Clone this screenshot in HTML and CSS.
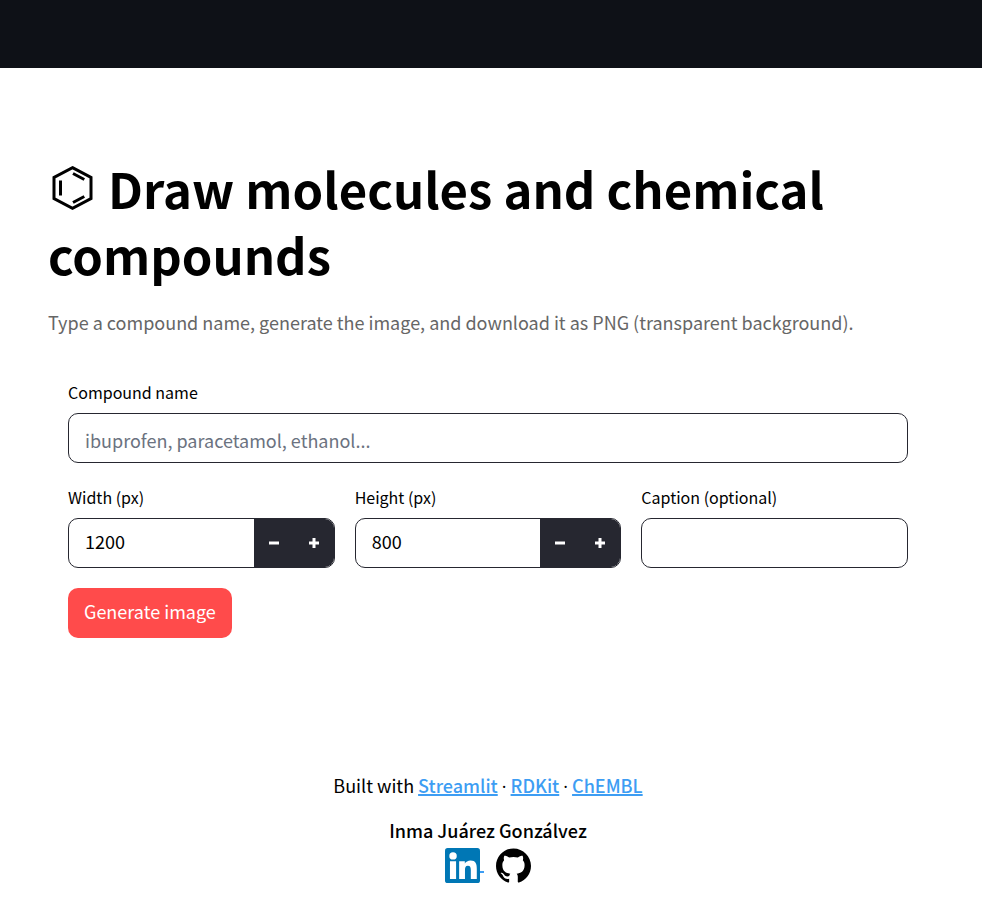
FILE: index.html
```html
<!DOCTYPE html>
<html lang="en">
<head>
<meta charset="utf-8">
<meta name="viewport" content="width=device-width, initial-scale=1">
<title>Draw molecules and chemical compounds</title>
<link rel="stylesheet" href="styles.css">
</head>
<body>
<header class="topbar"></header>
<main class="page">
  <h1 class="title"><svg class="molecule" viewBox="0 0 48 48" aria-hidden="true"><path d="M24 3.600 42.500 13.500v21L24 44.400 5.500 34.500v-21Z"/><path d="M12 16.500v15M24.500 9.500l11.300 6M24.500 38.500l11.300-6"/></svg> Draw molecules and chemical compounds</h1>
  <p class="intro">Type a compound name, generate the image, and download it as PNG (transparent background).</p>
  <form class="form">
    <div class="field">
      <label for="compound">Compound name</label>
      <div class="control"><input id="compound" class="text" type="text" placeholder="ibuprofen, paracetamol, ethanol..."></div>
    </div>
    <div class="columns">
      <div class="field">
        <label for="width">Width (px)</label>
        <div class="control">
          <input id="width" class="number" type="text" inputmode="numeric" value="1200">
          <button class="step" type="button" aria-label="Decrease width"><svg viewBox="0 0 10 10"><path d="M0 5h10"/></svg></button>
          <button class="step" type="button" aria-label="Increase width"><svg viewBox="0 0 10 10"><path d="M0 5h10M5 0v10"/></svg></button>
        </div>
      </div>
      <div class="field">
        <label for="height">Height (px)</label>
        <div class="control">
          <input id="height" class="number" type="text" inputmode="numeric" value="800">
          <button class="step" type="button" aria-label="Decrease height"><svg viewBox="0 0 10 10"><path d="M0 5h10"/></svg></button>
          <button class="step" type="button" aria-label="Increase height"><svg viewBox="0 0 10 10"><path d="M0 5h10M5 0v10"/></svg></button>
        </div>
      </div>
      <div class="field">
        <label for="caption">Caption (optional)</label>
        <div class="control"><input id="caption" class="text" type="text"></div>
      </div>
    </div>
    <button class="submit" type="submit">Generate image</button>
  </form>
</main>
<footer class="footer">
  <p class="credits">Built with <a href="#streamlit">Streamlit</a> <span class="dot">·</span> <a href="#rdkit">RDKit</a> <span class="dot">·</span> <a href="#chembl">ChEMBL</a></p>
  <p class="author">Inma Juárez Gonzálvez</p>
  <div class="social">
    <a class="linkedin" href="#linkedin" aria-label="LinkedIn"><svg viewBox="0 0 24 24"><rect width="24" height="24" rx="1.800" fill="#0077b5"/><g fill="#fff"><circle cx="5.500" cy="5.400" r="2.550"/><path d="M3.400 9h4.200v12.300H3.400zM9.700 9h3.900v1.700c.7-1.200 2.100-2.100 3.900-2.100 3.500 0 4.300 2.300 4.300 5.600v7.100h-4.100v-6.200c0-1.700-.3-3-2-3s-2 1.400-2 3v6.200h-4z"/></g></svg></a>
    <a href="#github" aria-label="GitHub"><svg viewBox="0 0 24 24"><path d="M12 .297c-6.630 0-12 5.373-12 12 0 5.303 3.438 9.800 8.205 11.385.6.113.82-.258.82-.577 0-.285-.01-1.040-.015-2.040-3.338.724-4.042-1.610-4.042-1.610C4.422 18.070 3.633 17.700 3.633 17.700c-1.087-.744.084-.729.084-.729 1.205.084 1.838 1.236 1.838 1.236 1.070 1.835 2.809 1.305 3.495.998.108-.776.417-1.305.76-1.605-2.665-.3-5.466-1.332-5.466-5.930 0-1.310.465-2.380 1.235-3.220-.135-.303-.54-1.523.105-3.176 0 0 1.005-.322 3.300 1.230.96-.267 1.980-.399 3-.405 1.020.006 2.040.138 3 .405 2.280-1.552 3.285-1.230 3.285-1.230.645 1.653.24 2.873.12 3.176.765.840 1.230 1.910 1.230 3.220 0 4.610-2.805 5.625-5.475 5.920.42.360.81 1.096.81 2.220 0 1.606-.015 2.896-.015 3.286 0 .315.210.690.825.570C20.565 22.092 24 17.592 24 12.297c0-6.627-5.373-12-12-12"/></svg></a>
  </div>
</footer>
</body>
</html>
```
FILE: styles.css
```css
* { box-sizing: border-box; }

body {
  margin: 0;
  background: #fff;
  color: #000;
  font: 18px/30px "Noto Sans CJK SC", sans-serif;
}

h1, p { margin: 0; }

.topbar {
  height: 68px;
  background: #0e1117;
}

.page { padding: 87px 54px 0 48px; }

.title {
  font-size: 49px;
  font-weight: 700;
  line-height: 66px;
}

.molecule {
  width: 49px;
  height: 48px;
  vertical-align: -3px;
  fill: none;
  stroke: #000;
  stroke-width: 3;
}

.intro {
  margin-top: 20px;
  color: #666;
}

.form {
  display: flex;
  flex-direction: column;
  gap: 20px;
  padding: 41px 20px 20px;
}

.columns {
  display: flex;
  gap: 20px;
}

.field {
  flex: 1;
  min-width: 0;
}

.field label {
  display: block;
  height: 35px;
  font-size: 16px;
  line-height: 28px;
}

.control {
  display: flex;
  height: 50px;
  overflow: hidden;
  border: 1px solid #262730;
  border-radius: 10px;
}

.control input {
  flex: 1;
  min-width: 0;
  border: 0;
  background: none;
  color: inherit;
  font: inherit;
}

.control .text { padding: 4px 16px 0; }

.control .number { padding: 0 16px 4px; }

.control input::placeholder {
  color: #6b7280;
  opacity: 1;
}

.step {
  display: flex;
  align-items: center;
  justify-content: center;
  width: 40px;
  padding: 0;
  border: 0;
  background: #262730;
}

.step svg {
  width: 10px;
  height: 10px;
  stroke: #fff;
  stroke-width: 3;
}

.submit {
  align-self: flex-start;
  height: 50px;
  padding: 0 16px 4px;
  border: 0;
  border-radius: 10px;
  background: #ff4b4b;
  color: #fff;
  font: inherit;
}

.footer {
  padding: 112px 6px 0 0;
  text-align: center;
}

.credits a {
  color: #3d9df3;
  font-weight: 500;
  text-decoration-thickness: 2px;
}

.dot { font-family: "Open Sans", sans-serif; }

.author {
  margin-top: 14px;
  font-weight: 500;
}

.social {
  display: flex;
  justify-content: center;
  gap: 12px;
  margin-top: 3px;
}

.social a {
  display: flex;
  align-items: center;
}

.social svg {
  width: 35px;
  height: 35px;
}

.linkedin::after {
  content: "";
  width: 4px;
  height: 2px;
  margin-top: 12px;
  background: #3d9df3;
}
```
